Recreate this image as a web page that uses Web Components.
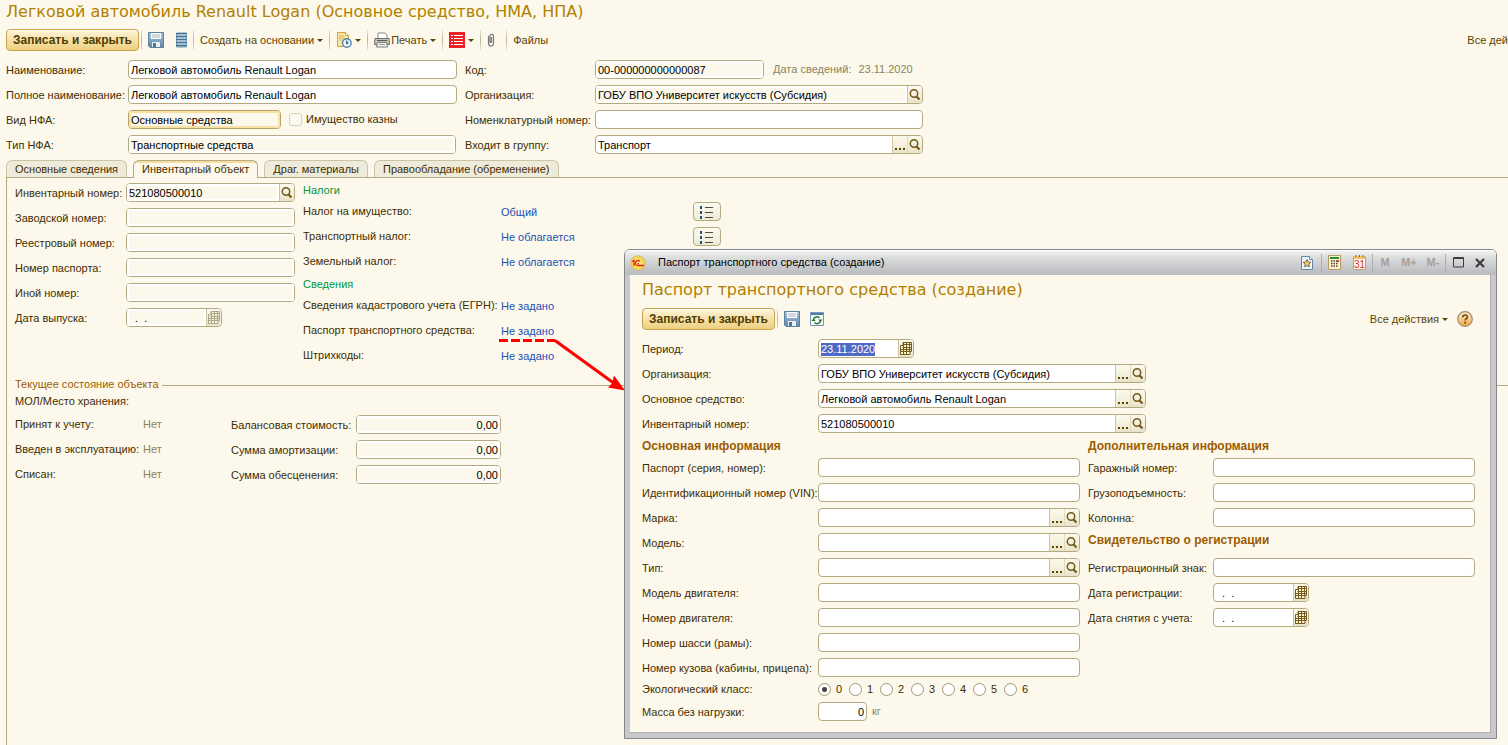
<!DOCTYPE html>
<html lang="ru">
<head>
<meta charset="utf-8">
<title>Легковой автомобиль Renault Logan</title>
<style>
  :root {
    --bg: #fcf9ec; --line: #b3aa82; --ink: #3f2d00; --ink2: #5a4200;
    --muted: #89835f; --gold: #b27f00; --brown: #9c5c00;
  }
  html, body { margin: 0; height: 100%; }
  body {
    background: var(--bg); color: var(--ink); overflow: hidden;
    font: 11px/13px "Liberation Sans", Arial, sans-serif;
  }
</style>
</head>
<body>
<asset-page></asset-page>

<script>
const BASE = `*{box-sizing:border-box} :host([hidden]){display:none}
  input,button{font:inherit;color:inherit;margin:0;padding:0}`;

const define = (name, html, setup) => {
  const tpl = document.createElement('template');
  customElements.define(name, class extends HTMLElement {
    constructor() { super(); this.attachShadow({ mode: 'open' }); }
    connectedCallback() {
      if (this.ready) return;
      this.ready = true;
      tpl.innerHTML = `<style>${BASE}</style>` + (typeof html === 'function' ? html(this) : html);
      this.shadowRoot.append(tpl.content.cloneNode(true));
      if (setup) setup(this, this.shadowRoot);
    }
  });
};
const attr = (el, n, d = '') => el.getAttribute(n) ?? d;

/* ---------- icons ---------- */
const ICONS = {
  save: [16, 16, `<defs><linearGradient id="g" x2="0" y2="1"><stop stop-color="#a9c5dc"/><stop offset="1" stop-color="#5d86a8"/></linearGradient></defs>
    <path d="M.5 .5h15v15H2L.5 14z" fill="url(#g)" stroke="#5b819f"/><path d="M3 1h10v6H3z" fill="#fff"/><path d="M4 3h8M4 5h8" stroke="#a3b5c4"/>
    <path d="M4 10h8v5H4z" fill="#e9eff4"/><path d="M5 11h3v4H5z" fill="#4f7693"/>`],
  list: [11, 16, `<path d="M.5 1h10v14H.5z" fill="#8db0ca" stroke="#6f97b5"/><path d="M0 1.500h11M0 4.500h11M0 7.500h11M0 10.500h11M0 13.500h11" stroke="#456f8f"/><path d="M1 3h9M1 6h9M1 9h9M1 12h9" stroke="#bcd2e2"/>`],
  doc: [16, 16, `<path d="M1.500.5h8l3 3v11h-11z" fill="#f9e6a4" stroke="#cfa545"/><path d="M9.500.5v3h3" fill="#fff5cf" stroke="#cfa545"/>
    <path d="M3 4h5M3 6h5M3 8h3" stroke="#dcb75b"/><circle cx="10.800" cy="11" r="4.300" fill="#eef7ff" stroke="#4f83b5" stroke-width="1.400"/><path d="M10.800 8.500v3l1.500-1" fill="none" stroke="#2d4f78" stroke-width="1.200"/>`],
  print: [16, 16, `<path d="M4 1h7l2 2v4H4z" fill="#fff" stroke="#8a8a8a"/><path d="M1 6.500h14l.5 6h-15z" fill="#c4c3bd" stroke="#6d6d6d"/>
    <path d="M3 8.500h10" stroke="#555"/><path d="M3.500 10.500h9l1 4.500h-11z" fill="#f4f4f4" stroke="#7a7a7a"/><path d="M5 12.500h6" stroke="#999"/><path d="M12 9.500h2" stroke="#e7b63d"/>`],
  red: [16, 16, `<path d="M0 0h16v16H0z" fill="#ec2425"/><path d="M5 3.500h9M5 6.500h9M5 9.500h9M5 12.500h9M2 3.500h2M2 6.500h2M2 9.500h2M2 12.500h2" stroke="#fff"/>`],
  clip: [13, 16, `<path d="M1.500 4v7.500a2.500 2.500 0 0 0 5 0V3.500a2 2 0 0 0-3.500 0V10a1 1 0 0 0 1.500 0V5" fill="none" stroke="#777" stroke-width="1.200"/>`],
  search: [14, 14, `<circle cx="6" cy="5.500" r="3.700" fill="none" stroke="#74591b" stroke-width="1.500"/><path d="M8.500 8.500l3 3" stroke="#74591b" stroke-width="2.200"/>`],
  dots: [12, 14, `<path d="M1 10h2v2H1zM5 10h2v2H5zM9 10h2v2H9z" fill="#5f4700"/>`],
  cal: [12, 13, `<path d="M3 .5h8.500v9H10v3H.5v-9H3z" fill="#fbf4d8" stroke="currentColor"/><path d="M3.500 2.500h8M2.500 5.500h9M.5 7.500h11M.5 9.500h10M3.500 1v11M6.500 1v11M9.500 1v9" stroke="currentColor"/>`],
  rows: [14, 14, `<path d="M5 2.500h8M5 7.500h8M5 12.500h8" stroke="#4a4a4a"/><path d="M0 1h2v3H0zM0 6h2v3H0zM0 11h2v3H0z" fill="#1d5280"/>`],
  refresh: [14, 14, `<path d="M.5 .5h13v13H.5z" fill="#f5f9fc" stroke="#7596b3"/><path d="M1 1h12v2H1z" fill="#4f7ca3"/>
    <path d="M3.500 7.500a3.500 3.500 0 0 1 6-1.500M10.500 9a3.500 3.500 0 0 1-6 1.500" fill="none" stroke="#2d7a2d" stroke-width="1.500"/><path d="M8.500 7.500h4L10.500 10zM1.500 9h4L3.500 6.500z" fill="#1f6a1f"/>`],
  help: [16, 16, `<defs><linearGradient id="h" x2="0" y2="1"><stop stop-color="#fff0d4"/><stop offset="1" stop-color="#efa548"/></linearGradient></defs>
    <circle cx="8" cy="8" r="7.300" fill="url(#h)" stroke="#a58a63" stroke-width="1.200"/><path d="M5.800 6.300c0-3 4.600-3 4.600-.3 0 1.700-2.300 1.700-2.300 3.600" fill="none" stroke="#6d4a1b" stroke-width="1.600"/><path d="M7.200 10.800h1.800v1.700H7.200z" fill="#6d4a1b"/>`],
  onec: [16, 16, `<defs><radialGradient id="o"><stop stop-color="#fff48c"/><stop offset="1" stop-color="#f8cf3a"/></radialGradient></defs>
    <circle cx="8" cy="8" r="7.300" fill="url(#o)" stroke="#cdb98c"/><path d="M2 6.500l2-1v5.500M9.800 6.300a2.500 2.500 0 1 0-2 4.200h6.200M9 8.600H7.600" fill="none" stroke="#e0221b" stroke-width="1.300"/>`],
  star: [12, 14, `<path d="M.5 .5h8l3 3v10H.5z" fill="#eef5fb" stroke="#6287a9"/><path d="M8.500 .5v3h3" fill="#fff" stroke="#6287a9"/><path d="M6 3.500l1.200 2.400 2.600.4-1.900 1.900.5 2.600L6 9.600l-2.400 1.200.5-2.600L2.200 6.300l2.600-.4z" fill="#f5c66c" stroke="#5c5039" stroke-width=".8"/>`],
  calc: [13, 15, `<path d="M.5 .5h12v14H.5z" fill="#fdf3cf" stroke="#b99b62"/><path d="M2 2h9v2H2z" fill="#2e8b2e"/><path d="M3 6h7M3 8.500h7M3 11h7" stroke="#4f4630" stroke-width="1.500" stroke-dasharray="1.500 1"/><path d="M9 5h2v2H9z" fill="#e33"/>`],
  day: [13, 15, `<path d="M.5 1.500h12v13H.5z" fill="#fffaf0" stroke="#c0a176"/><path d="M1 1h11v3H1z" fill="#f2c06c"/><path d="M3 0v2M6.500 0v2M10 0v2" stroke="#8b5a25"/><text x="6.500" y="13" font-family="Liberation Sans" font-size="10" font-weight="normal" text-anchor="middle" fill="#df2b1b">31</text>`],
  max: [11, 11, `<path d="M.5 .5h10v9.500H.5z" fill="none" stroke="#3c3c3c"/><path d="M0 1.500h11" stroke="#3c3c3c"/>`],
  close: [10, 10, `<path d="M1 1l8 8M9 1L1 9" stroke="#3a3a3a" stroke-width="2.200"/>`],
};
define('ui-icon', el => {
  const [w, h, body] = ICONS[attr(el, 'name')];
  return `<style>:host{display:inline-flex;flex:none}svg{display:block}</style>
    <svg width="${w}" height="${h}" viewBox="0 0 ${w} ${h}" aria-hidden="true">${body}</svg>`;
});

/* ---------- toolbar parts ---------- */
define('primary-button', `<style>
  :host{display:inline-flex;flex:none}
  button{height:22px;width:133px;border:1px solid #c9a44b;border-radius:4px;background:linear-gradient(#fdf5d9,#f6e2a9 50%,#edcf82);
    box-shadow:inset 0 1px #fffbee;font-weight:bold;font-size:12px;color:#523c00;white-space:nowrap}
  </style><button type="button"><slot></slot></button>`);

define('tool-button', el => `<style>
  :host{display:inline-flex;flex:none}
  button{display:flex;align-items:center;gap:1px;height:22px;border:0;background:none;color:var(--ink2);white-space:nowrap}
  .arrow{width:0;height:0;border:3px solid transparent;border-top-color:#5a4200;border-bottom-width:0;margin-left:2px}
  </style><button type="button" aria-label="${attr(el, 'label', el.textContent.trim())}">
  ${el.hasAttribute('icon') ? `<ui-icon name="${attr(el, 'icon')}"></ui-icon>` : ''}<slot></slot>
  ${el.hasAttribute('menu') ? '<span class="arrow"></span>' : ''}</button>`);

define('tool-sep', `<style>:host{display:block;flex:none;width:1px;height:20px;background:linear-gradient(#eae5cf,#b8b295,#eae5cf)}</style>`);

/* ---------- form field ---------- */
define('form-field', el => {
  const parts = attr(el, 'buttons').split(' ').filter(Boolean);
  const names = { dots: 'Выбрать', search: 'Открыть', cal: 'Календарь' };
  return `<style>
  :host{display:flex;align-items:center;height:19px;white-space:nowrap}
  label{flex:none;width:var(--label,111px);padding-top:2px}
  .box{display:flex;flex:0 1 var(--field,100%);min-width:0;height:19px;border:1px solid var(--line);border-radius:4px;background:#fff;overflow:hidden}
  input{flex:1;min-width:0;width:100%;border:0;outline:0;background:transparent;color:#000;padding:1px 2px 0;white-space:pre}
  input::selection{background:#4f69c6;color:#fff}
  :host([readonly]) input{background:var(--bg);border:2px solid #fff;padding:1px 0 0}
  :host([number]) input{text-align:right}
  :host([active]) .box{border-color:#b3a26c}
  :host([active]) input{border-color:#fbe0a4}
  button{flex:none;width:15px;border:0;border-left:1px solid #cdc5a2;background:linear-gradient(#fbf9ec,#f3efdb 60%,#e8e2c6);display:grid;place-items:center;color:#74591b}
  .box.pair button:nth-of-type(2){border-left-color:#e0dabf}
  :host([readonly]) .cal{color:#aaa68f}
  </style>
  <label for="f">${attr(el, 'label')}</label>
  <span class="box ${parts.length > 1 ? 'pair' : ''}"><input id="f" type="text" value="${attr(el, 'value')}" ${el.hasAttribute('readonly') ? 'readonly' : ''}>
  ${parts.map(p => `<button type="button" class="${p}" aria-label="${names[p]}"><ui-icon name="${p}"></ui-icon></button>`).join('')}</span><slot></slot>`;
}, (el, root) => {
  if (el.hasAttribute('selected')) { const i = root.querySelector('input'); i.focus({ preventScroll: true }); i.select(); }
});

/* ---------- caption with a value or link ---------- */
define('value-row', el => `<style>
  :host{display:flex;align-items:center;height:19px;white-space:nowrap}
  .cap{flex:none;width:var(--label,111px)}
  .val{color:var(--muted)} a{color:#1a52b4;text-decoration:none}
  .link{flex:none;width:192px;padding-top:2px}
  button{width:28px;height:19px;border:1px solid var(--line);border-radius:4px;background:linear-gradient(#fdfbf0,#efead3);display:grid;place-items:center}
  </style><span class="cap">${attr(el, 'label')}</span>
  ${el.hasAttribute('link') ? `<span class="link"><a href="#">${attr(el, 'link')}</a></span>` : `<span class="val">${attr(el, 'value')}</span>`}
  ${el.hasAttribute('history') ? '<button type="button" aria-label="История"><ui-icon name="rows"></ui-icon></button>' : ''}`);

define('check-box', `<style>
  :host{display:inline-flex}
  label{display:flex;align-items:center;gap:4px}
  input{appearance:none;width:13px;height:13px;border:1px solid #d8d2b8;border-radius:3px;background:#fcfaf0}
  </style><label><input type="checkbox"><slot></slot></label>`);

define('radio-row', el => `<style>
  :host{display:flex;align-items:center;height:13px;white-space:nowrap}
  fieldset{display:contents} .cap{flex:none;width:var(--label)}
  label{display:flex;align-items:center;gap:5px;width:31px}
  input{appearance:none;flex:none;width:13px;height:13px;border:1px solid #9f9670;border-radius:50%;background:#fff}
  input:checked{background:radial-gradient(circle,#444 0 2px,#fff 3px)}
  </style><fieldset aria-label="${attr(el, 'label')}"><span class="cap">${attr(el, 'label')}</span>
  ${[0, 1, 2, 3, 4, 5, 6].map(n => `<label><input type="radio" name="r" ${n ? '' : 'checked'}>${n}</label>`).join('')}</fieldset>`);

define('form-title', `<style>:host{display:block}h1{margin:0;font:16px/20px "DejaVu Sans",Verdana,sans-serif;color:var(--gold);white-space:nowrap}</style><h1><slot></slot></h1>`);
define('form-heading', `<style>:host{display:block;height:13px}h2{margin:0;font-size:11px;line-height:15px;font-weight:normal;color:#009646;white-space:nowrap}
  :host([strong]) h2{font-size:12px;font-weight:bold;color:var(--brown)}</style><h2><slot></slot></h2>`);
define('form-column', `<style>:host{display:flex;flex-direction:column;gap:6px;min-width:0}</style><slot></slot>`);
define('group-line', `<style>:host{display:flex;align-items:center;gap:3px;color:var(--brown);height:14px;white-space:nowrap}
  :host::after{content:"";flex:1;height:1px;margin-top:2px;background:var(--line)}</style><slot></slot>`);

/* ---------- tabs ---------- */
define('tab-strip', `<style>
  :host{display:block}
  nav{display:flex;align-items:flex-end;gap:6px;height:18px;border-bottom:1px solid var(--line)}
  button{height:17px;padding:1px 8px 0;border:1px solid #cbc5a6;border-bottom:0;border-radius:6px 6px 0 0;background:#eeebdb;white-space:nowrap;flex:none}
  button[aria-selected=true]{height:18px;margin-bottom:-1px;padding-bottom:1px;background:linear-gradient(#f8dc9c 0 2px,var(--bg) 2px);border-color:var(--line)}
  </style><nav role="tablist">
  <button role="tab" aria-selected="false">Основные сведения</button>
  <button role="tab" aria-selected="true">Инвентарный объект</button>
  <button role="tab" aria-selected="false">Драг. материалы</button>
  <button role="tab" aria-selected="false">Правообладание (обременение)</button></nav>`);

/* ---------- floating window ---------- */
define('app-window', el => `<style>
  :host{display:flex;flex-direction:column;border:1px solid #85858a;border-radius:6px 6px 0 0;background:#c9c9cc;padding:0 5px 5px}
  header{display:flex;align-items:center;height:25px;margin:0 -5px;padding:0 6px 0 5px;color:#000;background:linear-gradient(#f4f4f4,#dcdddd 30%,#cccdcf 60%,#b9babd);border-radius:5px 5px 0 0;box-shadow:inset 0 1px #fff}
  .t{margin-left:12px;white-space:nowrap}
  .tools{display:flex;align-items:center;margin-left:auto}
  .tools button{display:grid;place-items:center;border:0;background:none;color:#a79f9a;font-weight:bold;white-space:nowrap}
  .tools i{width:1px;height:18px;background:#aeafb1}
  main{flex:1;background:var(--bg);border-right:1px solid #b0b0b2;border-bottom:1px solid #b0b0b2}
  </style>
  <header><ui-icon name="onec"></ui-icon><span class="t">${attr(el, 'caption')}</span>
  <div class="tools">
    <button type="button" style="width:28px" aria-label="Избранное"><ui-icon name="star"></ui-icon></button><i></i>
    <button type="button" style="width:25px" aria-label="Калькулятор"><ui-icon name="calc"></ui-icon></button>
    <button type="button" style="width:25px" aria-label="Календарь"><ui-icon name="day"></ui-icon></button><i></i>
    <button type="button" style="width:24px">M</button><button type="button" style="width:24px">M+</button><button type="button" style="width:24px">M-</button><i></i>
    <button type="button" style="width:24px" aria-label="Развернуть"><ui-icon name="max"></ui-icon></button>
    <button type="button" style="width:20px" aria-label="Закрыть"><ui-icon name="close"></ui-icon></button>
  </div></header>
  <main><slot></slot></main>`);

define('passport-form', `<style>
  :host{display:block;padding:5px 15px 11px 12px}
  form-title{margin-bottom:8px}
  .bar{display:flex;align-items:center;margin-bottom:9px}
  .bar tool-sep{margin:0 6px 0 2px} .bar tool-button{margin-right:10px}
  .end{display:flex;align-items:center;margin-left:auto}
  .end tool-button{margin-right:2px} .end tool-button:first-child{margin-right:9px}
  form-column{--label:176px}
  .top{margin-bottom:6px}
  .wide{--field:328px} .date{--field:96px}
  .cols{display:grid;grid-template-columns:438fr 387fr;gap:8px}
  .right{--label:125px}
  .gap{margin-bottom:6px}
  .mass{--field:49px} .mass span{margin-left:5px;color:var(--muted)}
  </style>
  <form-title>Паспорт транспортного средства (создание)</form-title>
  <div class="bar"><primary-button>Записать и закрыть</primary-button><tool-sep></tool-sep>
    <tool-button icon="save" label="Записать"></tool-button><tool-button icon="refresh" label="Обновить"></tool-button>
    <div class="end"><tool-button menu>Все действия</tool-button><tool-button icon="help" label="Справка"></tool-button></div></div>
  <form-column class="top">
    <form-field class="date" label="Период:" value="23.11.2020" buttons="cal" selected></form-field>
    <form-field class="wide" label="Организация:" value="ГОБУ ВПО Университет искусств (Субсидия)" buttons="dots search"></form-field>
    <form-field class="wide" label="Основное средство:" value="Легковой автомобиль Renault Logan" buttons="dots search"></form-field>
    <form-field class="wide" label="Инвентарный номер:" value="521080500010" buttons="dots search"></form-field>
  </form-column>
  <div class="cols">
    <form-column>
      <form-heading strong>Основная информация</form-heading>
      <form-field label="Паспорт (серия, номер):"></form-field>
      <form-field label="Идентификационный номер (VIN):"></form-field>
      <form-field label="Марка:" buttons="dots search"></form-field>
      <form-field label="Модель:" buttons="dots search"></form-field>
      <form-field label="Тип:" buttons="dots search"></form-field>
      <form-field label="Модель двигателя:"></form-field>
      <form-field label="Номер двигателя:"></form-field>
      <form-field label="Номер шасси (рамы):"></form-field>
      <form-field label="Номер кузова (кабины, прицепа):"></form-field>
      <radio-row label="Экологический класс:"></radio-row>
      <form-field class="mass" label="Масса без нагрузки:" value="0" number><span>кг</span></form-field>
    </form-column>
    <form-column class="right">
      <form-heading strong>Дополнительная информация</form-heading>
      <form-field label="Гаражный номер:"></form-field>
      <form-field label="Грузоподъемность:"></form-field>
      <form-field label="Колонна:"></form-field>
      <form-heading strong class="gap">Свидетельство о регистрации</form-heading>
      <form-field label="Регистрационный знак:"></form-field>
      <form-field class="date" label="Дата регистрации:" value="  .  ." buttons="cal"></form-field>
      <form-field class="date" label="Дата снятия с учета:" value="  .  ." buttons="cal"></form-field>
    </form-column>
  </div>`);

/* ---------- main page ---------- */
define('asset-page', `<style>
  :host{display:flex;flex-direction:column;position:relative;min-height:100%;overflow:hidden;padding:2px 0 0 6px}
  .bar{display:flex;align-items:center;margin:7px 0 9px}
  .bar tool-sep{margin:0 6px}
  .bar tool-sep:first-of-type{margin-left:2px}
  .save{margin-right:12px}
  .more{margin-left:auto;white-space:nowrap;color:var(--ink2)}
  .head{display:flex;gap:8px;margin-bottom:6px}
  .c1{--label:122px;--field:329px;width:451px}
  .c2{--label:130px;--field:328px;width:458px}
  .kind{--field:153px} .type{--field:328px}
  .kind check-box{margin-left:8px}
  .code{--field:169px} .code span{margin-left:9px;color:var(--muted)} .code span + span{margin-left:7px}
  section{flex:1;border-left:1px solid var(--line);padding:5px 0 0 8px}
  .cols{display:flex;gap:8px}
  .inv{--label:111px;--field:169px;width:280px} .day{--field:96px}
  .tax{--label:198px}
  group-line{margin:12px 0 4px}
  .sum{display:flex;margin-top:7px}
  .st{--label:128px;width:216px}
  .money{--label:125px;--field:145px}
  .arrow{position:absolute;left:499px;top:336px}
  app-window{position:absolute;left:624px;right:11px;top:249px}
  </style>
  <form-title>Легковой автомобиль Renault Logan (Основное средство, НМА, НПА)</form-title>
  <div class="bar">
    <primary-button>Записать и закрыть</primary-button><tool-sep></tool-sep>
    <tool-button class="save" icon="save" label="Записать"></tool-button><tool-button icon="list" label="Список"></tool-button><tool-sep></tool-sep>
    <tool-button menu>Создать на основании</tool-button><tool-sep></tool-sep>
    <tool-button icon="doc" menu label="Отчеты"></tool-button><tool-sep></tool-sep>
    <tool-button icon="print" menu>Печать</tool-button><tool-sep></tool-sep>
    <tool-button icon="red" menu label="Перечень"></tool-button><tool-sep></tool-sep>
    <tool-button icon="clip" label="Прикрепить"></tool-button><tool-sep></tool-sep>
    <tool-button>Файлы</tool-button><span class="more">Все дей</span>
  </div>
  <div class="head">
    <form-column class="c1">
      <form-field label="Наименование:" value="Легковой автомобиль Renault Logan"></form-field>
      <form-field label="Полное наименование:" value="Легковой автомобиль Renault Logan"></form-field>
      <form-field class="kind" label="Вид НФА:" value="Основные средства" readonly active><check-box>Имущество казны</check-box></form-field>
      <form-field class="type" label="Тип НФА:" value="Транспортные средства" readonly></form-field>
    </form-column>
    <form-column class="c2">
      <form-field class="code" label="Код:" value="00-000000000000087" readonly><span>Дата сведений:</span><span>23.11.2020</span></form-field>
      <form-field label="Организация:" value="ГОБУ ВПО Университет искусств (Субсидия)" readonly buttons="search"></form-field>
      <form-field label="Номенклатурный номер:"></form-field>
      <form-field label="Входит в группу:" value="Транспорт" buttons="dots search"></form-field>
    </form-column>
  </div>
  <tab-strip></tab-strip>
  <section>
    <div class="cols">
      <form-column class="inv">
        <form-field label="Инвентарный номер:" value="521080500010" readonly buttons="search"></form-field>
        <form-field label="Заводской номер:" readonly></form-field>
        <form-field label="Реестровый номер:" readonly></form-field>
        <form-field label="Номер паспорта:" readonly></form-field>
        <form-field label="Иной номер:" readonly></form-field>
        <form-field class="day" label="Дата выпуска:" value="  .  ." readonly buttons="cal"></form-field>
      </form-column>
      <form-column class="tax">
        <form-heading>Налоги</form-heading>
        <value-row label="Налог на имущество:" link="Общий" history></value-row>
        <value-row label="Транспортный налог:" link="Не облагается" history></value-row>
        <value-row label="Земельный налог:" link="Не облагается"></value-row>
        <form-heading>Сведения</form-heading>
        <value-row label="Сведения кадастрового учета (ЕГРН):" link="Не задано"></value-row>
        <value-row label="Паспорт транспортного средства:" link="Не задано"></value-row>
        <value-row label="Штрихкоды:" link="Не задано"></value-row>
      </form-column>
    </div>
    <group-line>Текущее состояние объекта</group-line>
    <div>МОЛ/Место хранения:</div>
    <div class="sum">
      <form-column class="st">
        <value-row label="Принят к учету:" value="Нет"></value-row>
        <value-row label="Введен в эксплуатацию:" value="Нет"></value-row>
        <value-row label="Списан:" value="Нет"></value-row>
      </form-column>
      <form-column class="money">
        <form-field label="Балансовая стоимость:" value="0,00" readonly number></form-field>
        <form-field label="Сумма амортизации:" value="0,00" readonly number></form-field>
        <form-field label="Сумма обесценения:" value="0,00" readonly number></form-field>
      </form-column>
    </div>
  </section>
  <svg class="arrow" width="128" height="58" viewBox="0 0 128 58" aria-hidden="true">
    <path d="M0 4.500h56" stroke="#f00" stroke-width="3" stroke-dasharray="9 3"/>
    <path d="M56 4.500L116 48" stroke="#f00" stroke-width="3"/><path d="M126 54.500l-17-3 4-4 2-8z" fill="#f00"/>
  </svg>
  <app-window caption="Паспорт транспортного средства (создание)"><passport-form></passport-form></app-window>`);
</script>
</body>
</html>
